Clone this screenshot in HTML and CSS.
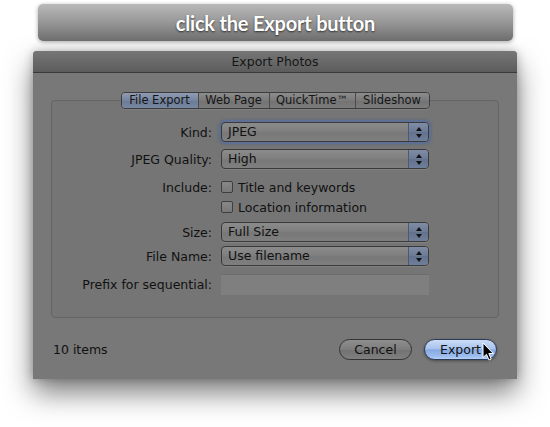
FILE: index.html
```html
<!DOCTYPE html>
<html>
<head>
<meta charset="utf-8">
<title>Export Photos</title>
<link rel="stylesheet" href="styles.css">
</head>
<body>
<div class="page">
  <div class="banner">click the Export button</div>
  <div class="dialog">
    <div class="titlebar">Export Photos</div>
    <div class="content">
      <div class="group">
        <div class="tabs">
          <div class="tab t1 sel">File Export</div>
          <div class="tab t2">Web Page</div>
          <div class="tab t3">QuickTime™</div>
          <div class="tab t4">Slideshow</div>
        </div>
        <div class="form">
          <div class="row r-kind">
            <span class="label">Kind:</span>
            <div class="select focus"><span class="value">JPEG</span><span class="stepper"><span class="up"></span><span class="down"></span></span></div>
          </div>
          <div class="row r-quality">
            <span class="label">JPEG Quality:</span>
            <div class="select"><span class="value">High</span><span class="stepper"><span class="up"></span><span class="down"></span></span></div>
          </div>
          <div class="row r-check1">
            <span class="label">Include:</span>
            <div class="check"><span class="box"></span><span class="ctext">Title and keywords</span></div>
          </div>
          <div class="row r-check2">
            <span class="label"></span>
            <div class="check"><span class="box"></span><span class="ctext">Location information</span></div>
          </div>
          <div class="row r-size">
            <span class="label">Size:</span>
            <div class="select"><span class="value">Full Size</span><span class="stepper"><span class="up"></span><span class="down"></span></span></div>
          </div>
          <div class="row r-name">
            <span class="label">File Name:</span>
            <div class="select"><span class="value">Use filename</span><span class="stepper"><span class="up"></span><span class="down"></span></span></div>
          </div>
          <div class="row r-prefix">
            <span class="label">Prefix for sequential:</span>
            <div class="field"></div>
          </div>
        </div>
      </div>
      <div class="footer">
        <span class="count">10 items</span>
        <div class="buttons">
          <div class="btn cancel">Cancel</div>
          <div class="btn default">Export
            <svg class="cursor" width="13" height="20" viewBox="0 0 13 20"><path d="M1 1 L1 15.5 L4.5 12.3 L7 18 L9.2 17 L6.8 11.5 L11.3 11.5 Z" fill="#000" stroke="#fff" stroke-width="1" stroke-linejoin="round"/></svg>
          </div>
        </div>
      </div>
    </div>
  </div>
</div>
</body>
</html>
```

FILE: styles.css
```css
* { box-sizing: border-box; }
html, body { margin: 0; padding: 0; background: #ffffff; }
body { width: 550px; height: 427px; overflow: hidden; font-family: "DejaVu Sans", "Liberation Sans", sans-serif; font-size: 12.5px; color: #111; }

.page { padding-top: 4px; }

.banner {
  margin-left: 38px;
  width: 475px;
  height: 37px;
  border-radius: 5px;
  background: linear-gradient(to bottom, #b9b9b9 0%, #9a9a9a 45%, #6f6f6f 100%);
  box-shadow: 0 1px 4px rgba(0,0,0,0.35);
  display: flex;
  align-items: center;
  justify-content: center;
  font-family: Lato, "Open Sans", sans-serif;
  font-weight: 700;
  font-size: 20px;
  letter-spacing: -0.2px;
  color: #ffffff;
  text-shadow: 0 1px 2px rgba(0,0,0,0.65);
}

.dialog {
  margin-top: 10px;
  margin-left: 33px;
  width: 484px;
  height: 328px;
  background: #787878;
  border-radius: 4px 4px 0 0;
  box-shadow: 0 14px 28px rgba(0,0,0,0.5), 0 0 10px rgba(0,0,0,0.25);
}

.titlebar {
  height: 22px;
  line-height: 21px;
  text-align: center;
  font-size: 12.5px;
  color: #161616;
  background: linear-gradient(to bottom, #767676, #5c5c5c);
  border-bottom: 1px solid #3a3a3a;
  border-radius: 4px 4px 0 0;
}

.content { padding: 27px 18px 0 18px; }

.group {
  height: 218px;
  border: 1px solid #646464;
  border-radius: 4px;
  background: #757575;
}

.tabs {
  display: flex;
  width: 309px;
  height: 17px;
  margin: -9px auto 0 auto;
  border: 1px solid #3c3c3c;
  border-radius: 4px;
  overflow: hidden;
  box-shadow: 0 1px 0 rgba(255,255,255,0.08);
}
.tab {
  height: 15px;
  line-height: 15px;
  text-align: center;
  font-size: 11.5px;
  color: #151515;
  background: linear-gradient(to bottom, #8c8c8c, #7a7a7a 50%, #727272 51%, #7c7c7c);
  border-left: 1px solid #4a4a4a;
}
.tab.t1 { width: 76px; border-left: none; }
.tab.t2 { width: 71px; }
.tab.t3 { width: 86px; }
.tab.t4 { width: 74px; }
.tab.sel {
  background: linear-gradient(to bottom, #8f9cb3, #76859f 50%, #6a7a96 51%, #7887a2);
}

.form { margin-top: 13px; }
.row {
  display: grid;
  grid-template-columns: 160px 208px;
  column-gap: 9px;
  align-items: center;
}
.label { text-align: right; white-space: nowrap; }
.r-kind { height: 20px; }
.r-quality { height: 20px; margin-top: 7px; }
.r-check1 { height: 18px; margin-top: 9px; }
.r-check2 { height: 18px; margin-top: 2px; }
.r-size { height: 20px; margin-top: 6px; }
.r-name { height: 20px; margin-top: 4px; }
.r-prefix { height: 21px; margin-top: 8px; }

.select {
  height: 20px;
  display: flex;
  border: 1px solid #3a3a3a;
  border-radius: 4px;
  overflow: hidden;
  background: linear-gradient(to bottom, #8b8b8b, #808080 45%, #787878 55%, #7f7f7f);
  box-shadow: 0 1px 0 rgba(255,255,255,0.1);
}
.select.focus {
  box-shadow: 0 0 0 2px #5d6f93, 0 0 3px 2px rgba(70,95,140,0.6);
}
.value { flex: 1; padding-left: 6px; line-height: 18px; }
.stepper {
  width: 20px;
  border-left: 1px solid #4f5870;
  background: linear-gradient(to bottom, #7f8ca5, #6b7a95 50%, #62718d 51%, #6f7e99);
  display: flex;
  flex-direction: column;
  align-items: center;
  justify-content: center;
  gap: 3px;
}
.stepper .up { width: 0; height: 0; border-left: 3px solid transparent; border-right: 3px solid transparent; border-bottom: 4px solid #111; }
.stepper .down { width: 0; height: 0; border-left: 3px solid transparent; border-right: 3px solid transparent; border-top: 4px solid #111; }

.check { display: flex; align-items: center; gap: 5px; }
.box {
  width: 12px; height: 12px;
  border: 1px solid #3e3e3e;
  border-radius: 2px;
  background: linear-gradient(to bottom, #878787, #797979);
}

.field {
  height: 21px;
  background: #7f7f7f;
  border-top: 1px solid #6c6c6c;
}

.footer {
  margin-top: 21px;
  height: 21px;
  padding: 0 2px;
  display: flex;
  align-items: center;
  justify-content: space-between;
}
.buttons { display: flex; gap: 12px; }
.btn {
  position: relative;
  width: 73px;
  height: 21px;
  line-height: 19px;
  text-align: center;
  border-radius: 11px;
  border: 1px solid #333;
}
.btn.cancel {
  background: linear-gradient(to bottom, #8e8e8e, #7d7d7d 50%, #727272 51%, #7f7f7f);
}
.btn.default {
  border-color: #2c3a58;
  background: linear-gradient(to bottom, #cbdcf5 0%, #a9c4ee 45%, #86a9e2 52%, #9cbcee 85%, #b6d0f6 100%);
  box-shadow: 0 1px 3px rgba(0,0,0,0.4);
}
.cursor { position: absolute; left: 57px; top: 2px; }
```
